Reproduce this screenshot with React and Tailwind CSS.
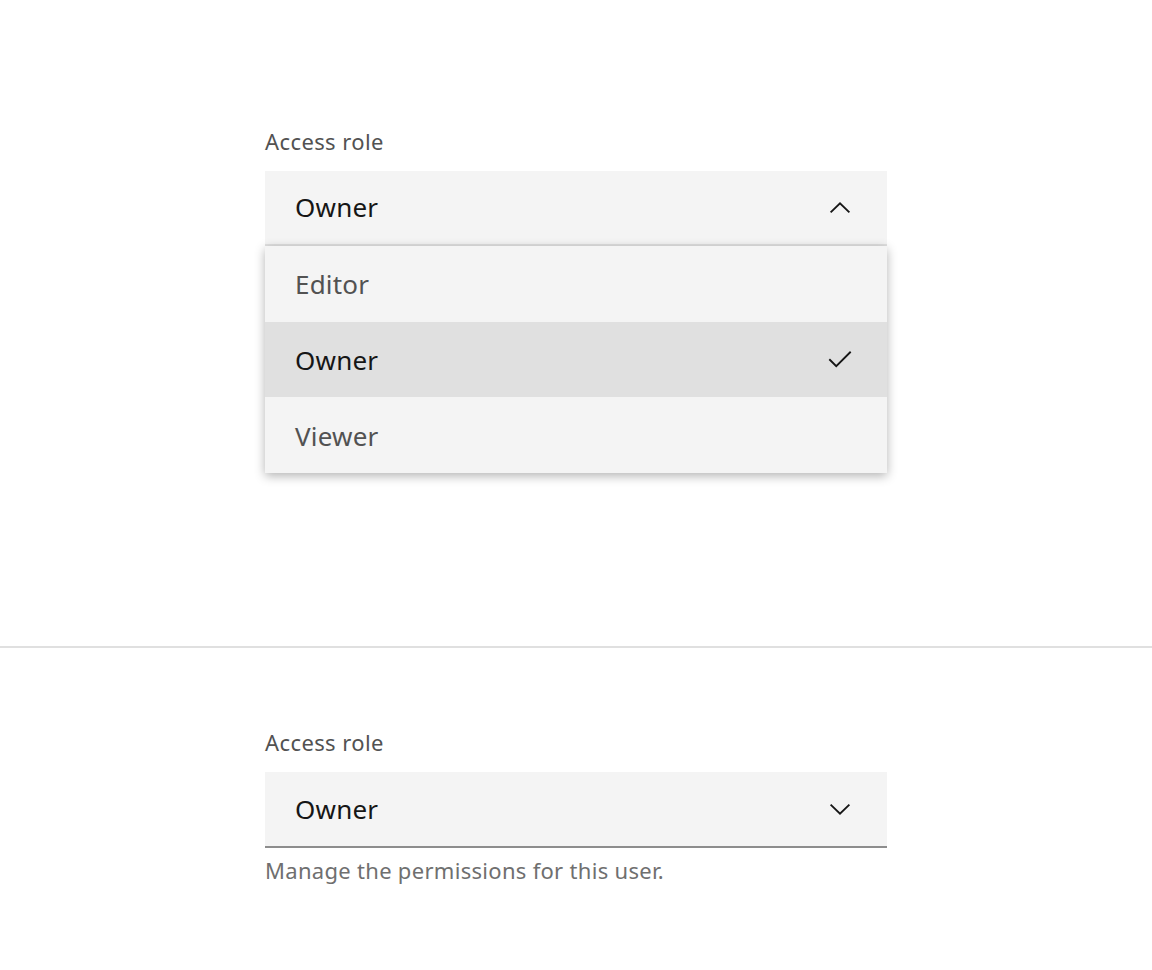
import React from 'react';

const font = { fontFamily: '"Noto Sans", "Open Sans", sans-serif' };

const ChevronDown = () => (
  <svg width="30" height="30" viewBox="0 0 16 16" fill="none" stroke="#161616" strokeWidth="1">
    <path d="M3 5.7L8 10.5 13 5.7" />
  </svg>
);

const ChevronUp = () => (
  <svg width="30" height="30" viewBox="0 0 16 16" fill="none" stroke="#161616" strokeWidth="1">
    <path d="M3 10.3L8 5.5 13 10.3" />
  </svg>
);

const Check = () => (
  <svg width="30" height="30" viewBox="0 0 16 16" fill="none" stroke="#161616" strokeWidth="1">
    <path d="M2.3 7.6L6 11.3 13.7 3.6" />
  </svg>
);

const items = ['Editor', 'Owner', 'Viewer'];

export default function App() {
  return (
    <div className="w-[1152px] min-h-[970px] bg-white" style={font}>
      {/* Open dropdown */}
      <div className="h-[646px] pt-[126px]">
        <div className="w-[622px] mx-auto">
          <label className="block text-[22px] leading-[30px] tracking-[0.4px] text-[#525252] mb-[15px]">Access role</label>
          <div className="relative">
            <div className="h-[75px] bg-[#f4f4f4] border-b-2 border-[#e0e0e0] flex items-center justify-between pl-[30px] pr-[32px]">
              <span className="text-[26px] text-[#161616] tracking-[0.2px]">Owner</span>
              <ChevronUp />
            </div>
            <div className="absolute left-0 right-0 top-[75px] bg-[#f4f4f4] shadow-[0_3px_10px_rgba(0,0,0,0.3)]">
              {items.map((it) => (
                <div
                  key={it}
                  className={
                    it === 'Owner'
                      ? 'h-[75.7px] flex items-center justify-between pl-[30px] pr-[32px] bg-[#e0e0e0] text-[#161616]'
                      : 'h-[75.7px] flex items-center justify-between pl-[30px] pr-[32px] text-[#525252]'
                  }
                >
                  <span className="text-[26px] tracking-[0.2px] pt-[2px]">{it}</span>
                  {it === 'Owner' && <Check />}
                </div>
              ))}
            </div>
          </div>
        </div>
      </div>

      <div className="h-[2px] bg-[#e0e0e0]" />

      {/* Closed dropdown with helper text */}
      <div className="pt-[79px] pb-[80px]">
        <div className="w-[622px] mx-auto">
          <label className="block text-[22px] leading-[30px] tracking-[0.4px] text-[#525252] mb-[15px]">Access role</label>
          <div className="h-[76px] bg-[#f4f4f4] border-b-2 border-[#8d8d8d] flex items-center justify-between pl-[30px] pr-[32px]">
            <span className="text-[26px] text-[#161616] tracking-[0.2px]">Owner</span>
            <ChevronDown />
          </div>
          <p className="mt-[7px] text-[22px] leading-[30px] tracking-[0.3px] text-[#6f6f6f]">Manage the permissions for this user.</p>
        </div>
      </div>
    </div>
  );
}
